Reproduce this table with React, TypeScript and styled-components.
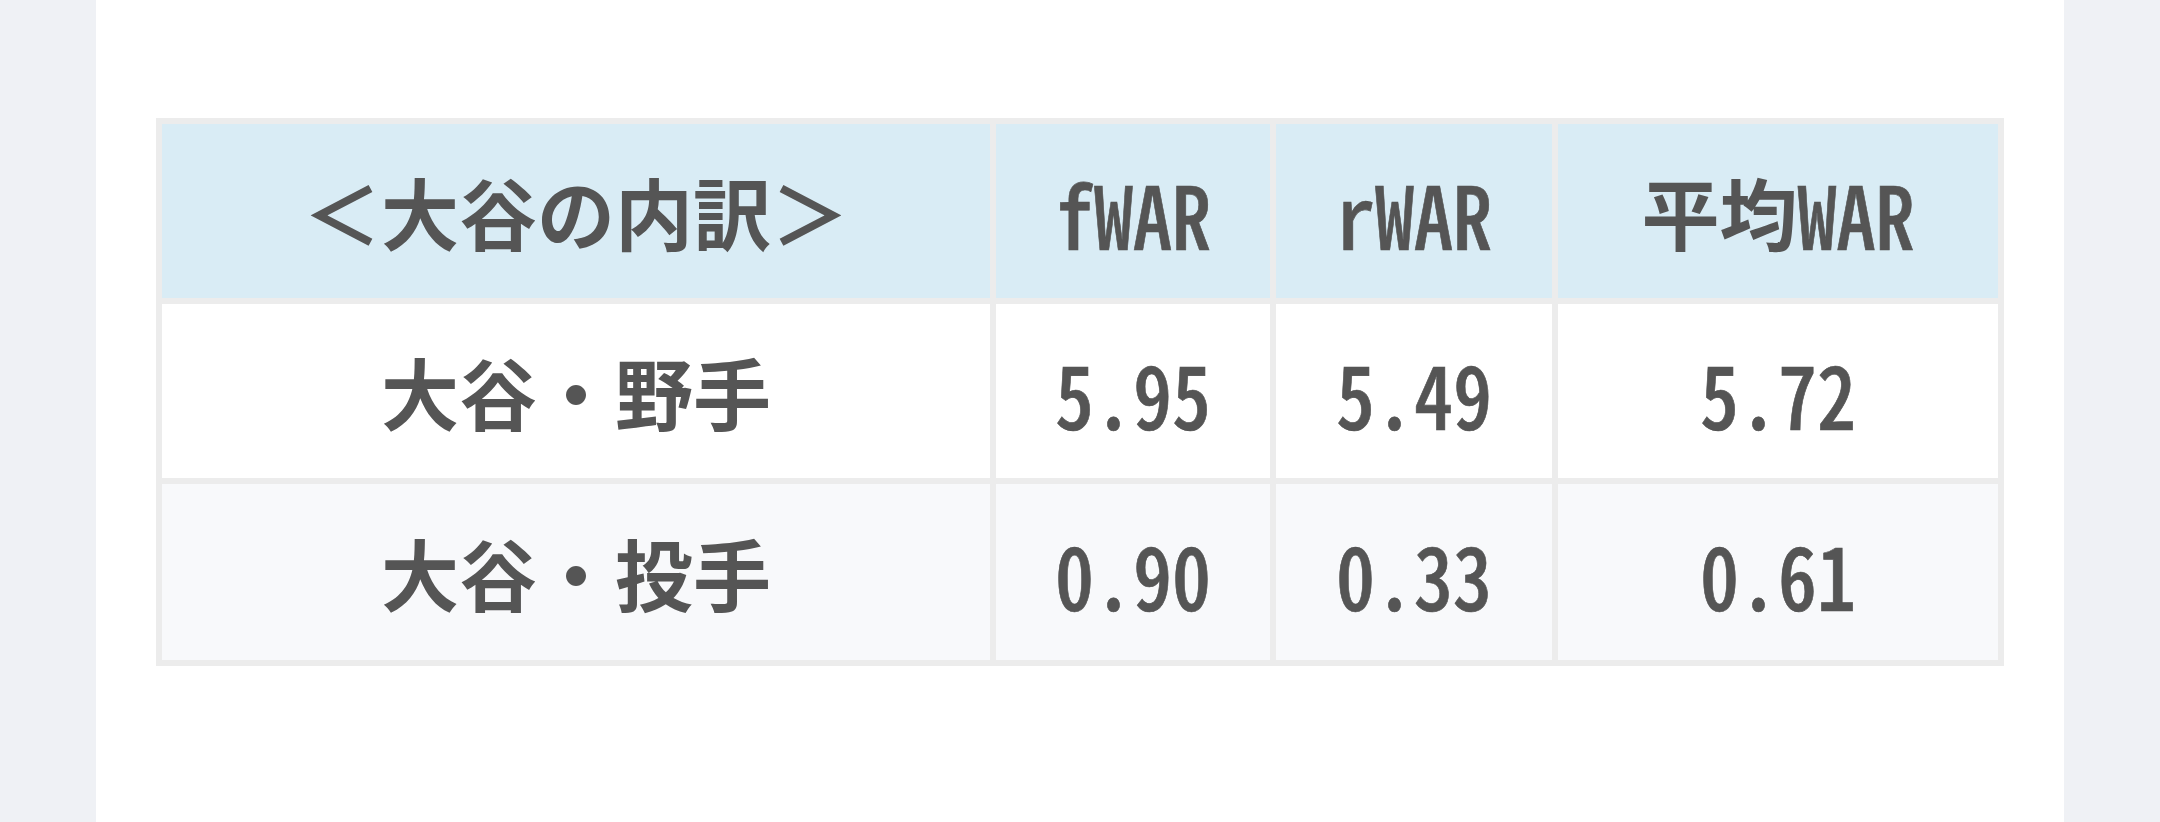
import React from "react";
import styled, { createGlobalStyle } from "styled-components";

const GlobalStyle = createGlobalStyle`
  html, body {
    margin: 0;
    padding: 0;
    background: #eff1f5;
  }
  body {
    font-family: "Noto Sans CJK JP", "Noto Sans", sans-serif;
  }
`;

const Page = styled.div`
  display: flex;
  justify-content: center;
  min-height: 822px;
  background: #eff1f5;
`;

const Panel = styled.main`
  width: 1968px;
  min-height: 822px;
  box-sizing: border-box;
  background: #ffffff;
  padding: 118px 60px 0;
`;

const Table = styled.table`
  width: 1848px;
  table-layout: fixed;
  border-collapse: separate;
  border-spacing: 6px;
  background: #ececec;
  color: #555555;
  font-family: "Noto Sans CJK JP", "Noto Sans", sans-serif;
  font-weight: 700;
  font-size: 78px;
`;

const HeadCell = styled.th`
  height: 174px;
  padding: 0;
  background: #d9ecf5;
  text-align: center;
  vertical-align: middle;
  font-weight: 700;
  white-space: nowrap;
`;

const Row = styled.tr<{ $alt?: boolean }>`
  background: ${(p) => (p.$alt ? "#f8f9fb" : "#ffffff")};
`;

const Cell = styled.td<{ $tall?: boolean }>`
  height: ${(p) => (p.$tall ? "176px" : "174px")};
  padding: 0;
  text-align: center;
  vertical-align: middle;
  white-space: nowrap;
`;

/* Half-width Latin glyphs of the CJK face, slightly taller as in the reference */
const Latin = styled.span`
  display: inline-block;
  line-height: 1;
  font-weight: 500;
  font-feature-settings: "hwid" 1;
  -webkit-text-stroke: 0.6px #555555;
  transform: scaleY(1.12);
  transform-origin: 50% 44%;
`;

const widths = [828, 274, 276, 440];

const rows = [
  { name: "大谷・野手", f: "5.95", r: "5.49", avg: "5.72" },
  { name: "大谷・投手", f: "0.90", r: "0.33", avg: "0.61" },
];

export default function App() {
  return (
    <>
      <GlobalStyle />
      <Page>
        <Panel>
          <Table>
            <colgroup>
              {widths.map((w, i) => (
                <col key={i} style={{ width: w }} />
              ))}
            </colgroup>
            <thead>
              <tr>
                <HeadCell>＜大谷の内訳＞</HeadCell>
                <HeadCell>
                  <Latin>fWAR</Latin>
                </HeadCell>
                <HeadCell>
                  <Latin>rWAR</Latin>
                </HeadCell>
                <HeadCell>
                  平均<Latin>WAR</Latin>
                </HeadCell>
              </tr>
            </thead>
            <tbody>
              {rows.map((r, i) => {
                const tall = i === rows.length - 1;
                return (
                  <Row key={r.name} $alt={i % 2 === 1}>
                    <Cell $tall={tall}>{r.name}</Cell>
                    <Cell $tall={tall}>
                      <Latin>{r.f}</Latin>
                    </Cell>
                    <Cell $tall={tall}>
                      <Latin>{r.r}</Latin>
                    </Cell>
                    <Cell $tall={tall}>
                      <Latin>{r.avg}</Latin>
                    </Cell>
                  </Row>
                );
              })}
            </tbody>
          </Table>
        </Panel>
      </Page>
    </>
  );
}
